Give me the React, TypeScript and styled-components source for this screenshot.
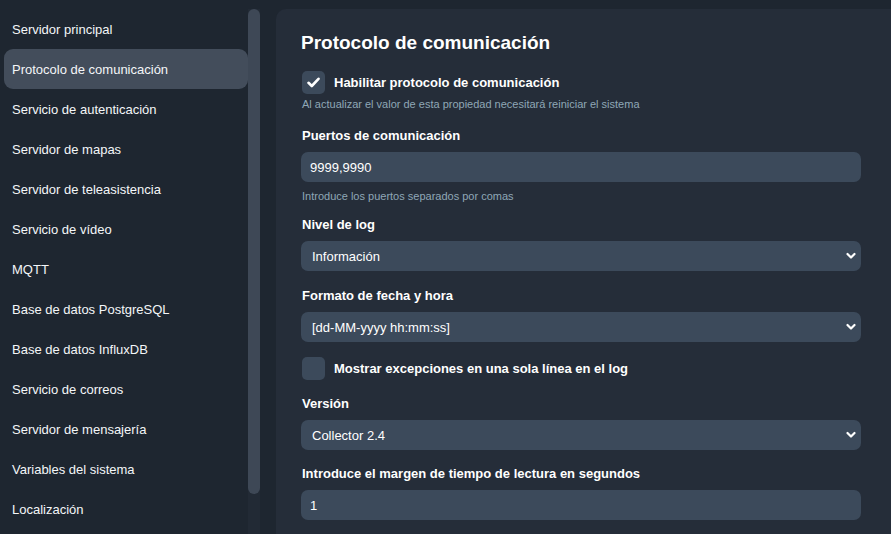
import React, { useState } from 'react'
import styled, { createGlobalStyle } from 'styled-components'

const GlobalStyle = createGlobalStyle`
  html, body {
    margin: 0;
    padding: 0;
    background: #1e2630;
    font-family: "Liberation Sans", Arial, sans-serif;
    color: #ffffff;
    overflow: hidden;
  }
  * {
    box-sizing: border-box;
  }
`

const Layout = styled.div`
  display: flex;
  height: 100vh;
  gap: 16px;
`

const Sidebar = styled.nav`
  width: 260px;
  flex-shrink: 0;
  display: flex;
  padding: 9px 0 0 4px;
  height: 100vh;
  overflow: hidden;
`

const NavList = styled.div`
  width: 244px;
  flex-shrink: 0;
`

const ScrollTrack = styled.div`
  width: 12px;
  flex-shrink: 0;
  background: #222a35;
`

const ScrollThumb = styled.div`
  height: 485px;
  border-radius: 6px;
  background: #3e4856;
`

const NavItem = styled.div<{ $active?: boolean }>`
  height: 40px;
  display: flex;
  align-items: center;
  padding: 0 8px;
  border-radius: 9px;
  font-size: 13px;
  color: #f4f6f8;
  background: ${p => (p.$active ? '#434d5b' : 'transparent')};
  cursor: pointer;
`

const Panel = styled.main`
  flex: 1;
  margin-top: 9px;
  background: #252d39;
  border-radius: 10px 0 0 0;
  padding: 22px 30px 0 25px;
`

const Title = styled.h1`
  margin: 0 0 16px 0;
  font-size: 19px;
  line-height: 24px;
  font-weight: 700;
`

const CheckRow = styled.label`
  display: flex;
  align-items: center;
  gap: 9px;
  font-size: 13px;
  font-weight: 700;
  line-height: 23px;
  margin-left: 1px;
  cursor: pointer;
`

const CheckBox = styled.span`
  width: 23px;
  height: 23px;
  border-radius: 5px;
  background: #3c4a5b;
  display: flex;
  align-items: center;
  justify-content: center;
  flex-shrink: 0;
`

const Block = styled.div<{ $gap?: number }>`
  margin-bottom: ${p => p.$gap ?? 16}px;
`

const Label = styled.div`
  font-size: 13px;
  font-weight: 700;
  line-height: 18px;
  margin: 0 0 7px 1px;
`

const Help = styled.div<{ $gap?: number }>`
  font-size: 11px;
  line-height: 14px;
  color: #8fa7b6;
  margin: ${p => p.$gap ?? 7}px 0 0 1px;
`

const TextInput = styled.input`
  display: block;
  width: 100%;
  height: 30px;
  border: none;
  outline: none;
  border-radius: 7px;
  background: #3c4a5b;
  color: #ffffff;
  font-family: inherit;
  font-size: 13px;
  padding: 0 9px;
`

const SelectWrap = styled.div`
  position: relative;
  height: 30px;
`

const Select = styled.select`
  appearance: none;
  width: 100%;
  height: 30px;
  border: none;
  outline: none;
  border-radius: 7px;
  background: #3c4a5b;
  color: #ffffff;
  font-family: inherit;
  font-size: 13px;
  padding: 0 30px 0 11px;
`

const Chevron = styled.svg`
  position: absolute;
  right: 5px;
  top: 11px;
  pointer-events: none;
`

const items = [
  'Servidor principal',
  'Protocolo de comunicación',
  'Servicio de autenticación',
  'Servidor de mapas',
  'Servidor de teleasistencia',
  'Servicio de vídeo',
  'MQTT',
  'Base de datos PostgreSQL',
  'Base de datos InfluxDB',
  'Servicio de correos',
  'Servidor de mensajería',
  'Variables del sistema',
  'Localización',
]

const Check = () => (
  <svg width="13" height="11" viewBox="0 0 13 11">
    <path d="M1.5 5.8 L4.8 9 L11.5 1.8" fill="none" stroke="#fff" strokeWidth="2.6" strokeLinecap="round" strokeLinejoin="round" />
  </svg>
)

const Dropdown: React.FC<{ value: string; options: string[] }> = ({ value, options }) => (
  <SelectWrap>
    <Select defaultValue={value}>
      {options.map(o => <option key={o}>{o}</option>)}
    </Select>
    <Chevron width="10" height="8" viewBox="0 0 10 8">
      <path d="M1.5 2 L5 5.5 L8.5 2" fill="none" stroke="#fff" strokeWidth="2.2" strokeLinecap="round" strokeLinejoin="round" />
    </Chevron>
  </SelectWrap>
)

export default function App() {
  const [enabled, setEnabled] = useState(true)
  const [singleLine, setSingleLine] = useState(false)

  return (
    <>
      <GlobalStyle />
      <Layout>
        <Sidebar>
          <NavList>
            {items.map((it, i) => (
              <NavItem key={it} $active={i === 1}>{it}</NavItem>
            ))}
          </NavList>
          <ScrollTrack>
            <ScrollThumb />
          </ScrollTrack>
        </Sidebar>
        <Panel>
          <Title>Protocolo de comunicación</Title>
          <Block>
            <CheckRow onClick={() => setEnabled(v => !v)}>
              <CheckBox>{enabled && <Check />}</CheckBox>
              Habilitar protocolo de comunicación
            </CheckRow>
            <Help $gap={3}>Al actualizar el valor de esta propiedad necesitará reiniciar el sistema</Help>
          </Block>
          <Block $gap={13}>
            <Label>Puertos de comunicación</Label>
            <TextInput defaultValue="9999,9990" />
            <Help>Introduce los puertos separados por comas</Help>
          </Block>
          <Block>
            <Label>Nivel de log</Label>
            <Dropdown value="Información" options={['Depuración', 'Información', 'Aviso', 'Error']} />
          </Block>
          <Block $gap={15}>
            <Label>Formato de fecha y hora</Label>
            <Dropdown value="[dd-MM-yyyy hh:mm:ss]" options={['[dd-MM-yyyy hh:mm:ss]', '[yyyy-MM-dd HH:mm:ss]']} />
          </Block>
          <Block $gap={15}>
            <CheckRow onClick={() => setSingleLine(v => !v)}>
              <CheckBox>{singleLine && <Check />}</CheckBox>
              Mostrar excepciones en una sola línea en el log
            </CheckRow>
          </Block>
          <Block $gap={15}>
            <Label>Versión</Label>
            <Dropdown value="Collector 2.4" options={['Collector 2.3', 'Collector 2.4']} />
          </Block>
          <Block>
            <Label>Introduce el margen de tiempo de lectura en segundos</Label>
            <TextInput defaultValue="1" />
          </Block>
        </Panel>
      </Layout>
    </>
  )
}
